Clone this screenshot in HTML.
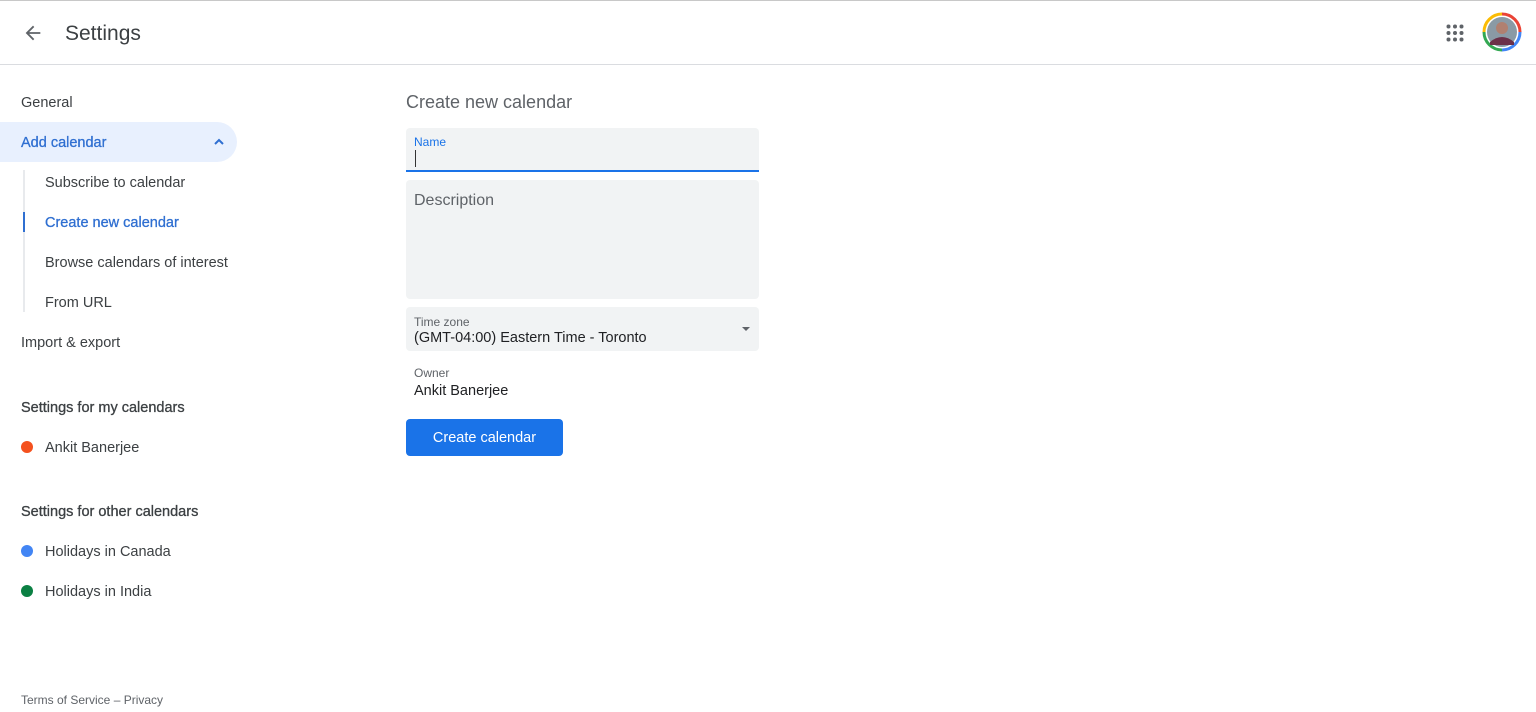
<!DOCTYPE html>
<html><head><style>
*{margin:0;padding:0;box-sizing:border-box}
body{width:1536px;height:712px;overflow:hidden;background:#fff;font-family:"Liberation Sans",Arial,sans-serif;color:#3c4043;position:relative}
.abs{position:absolute;white-space:nowrap}
.hdr{position:absolute;left:0;top:0;width:1536px;height:65px;border-top:1px solid #c8c8c8;border-bottom:1px solid #dadce0}
.nav{font-size:14.5px;color:#3c4043}
.blue{color:#2f6fd1;-webkit-text-stroke:0.3px #2f6fd1}
.med{-webkit-text-stroke:0.3px #3c4043}
.dot{position:absolute;width:12px;height:12px;border-radius:50%}
.field{position:absolute;left:406px;width:353px;background:#f1f3f4;border-radius:4px 4px 0 0}
</style></head><body>
<div class="hdr"></div>
<svg class="abs" style="left:22px;top:22px" width="22" height="22" viewBox="0 0 24 24"><path d="M20 11H7.8l5.6-5.6L12 4l-8 8 8 8 1.4-1.4L7.8 13H20z" fill="#5f6368"/></svg>
<div class="abs" style="left:65px;top:22px;font-size:21px;color:#3c4043">Settings</div>
<svg class="abs" style="left:1446px;top:24px" width="18" height="18" viewBox="0 0 18 18" fill="#5f6368"><circle cx="2.5" cy="2.5" r="2"/><circle cx="9" cy="2.5" r="2"/><circle cx="15.5" cy="2.5" r="2"/><circle cx="2.5" cy="9" r="2"/><circle cx="9" cy="9" r="2"/><circle cx="15.5" cy="9" r="2"/><circle cx="2.5" cy="15.5" r="2"/><circle cx="9" cy="15.5" r="2"/><circle cx="15.5" cy="15.5" r="2"/></svg>
<svg class="abs" style="left:1482px;top:12px" width="40" height="40" viewBox="0 0 40 40">
<path d="M20 2A18 18 0 0 1 38 20" stroke="#ea4335" stroke-width="3" fill="none"/>
<path d="M38 20A18 18 0 0 1 20 38" stroke="#4285f4" stroke-width="3" fill="none"/>
<path d="M20 38A18 18 0 0 1 2 20" stroke="#34a853" stroke-width="3" fill="none"/>
<path d="M2 20A18 18 0 0 1 20 2" stroke="#fbbc05" stroke-width="3" fill="none"/>
<circle cx="20" cy="20" r="15" fill="#8a9aa5"/><circle cx="20" cy="16" r="6" fill="#b08070"/><path d="M8 30q12-10 24 0v3H8z" fill="#6b3048"/></svg>

<div class="abs" style="left:0;top:122px;width:237px;height:40px;background:#e8f0fe;border-radius:0 20px 20px 0"></div>
<div class="abs nav" style="left:21px;top:95px">General</div>
<div class="abs nav blue" style="left:21px;top:135px">Add calendar</div>
<svg class="abs" style="left:212px;top:136px" width="14" height="12" viewBox="0 0 14 12"><path d="M3 8l4-4 4 4" stroke="#2f6fd1" stroke-width="2" fill="none"/></svg>
<div class="abs" style="left:23px;top:170px;width:2px;height:142px;background:#e8eaed"></div>
<div class="abs" style="left:23px;top:212px;width:2px;height:20px;background:#2f6fd1"></div>
<div class="abs nav" style="left:45px;top:175px">Subscribe to calendar</div>
<div class="abs nav blue" style="left:45px;top:215px">Create new calendar</div>
<div class="abs nav" style="left:45px;top:255px">Browse calendars of interest</div>
<div class="abs nav" style="left:45px;top:295px">From URL</div>
<div class="abs nav" style="left:21px;top:335px">Import &amp; export</div>
<div class="abs nav med" style="left:21px;top:400px">Settings for my calendars</div>
<div class="dot" style="left:21px;top:441px;background:#f4511e"></div>
<div class="abs nav" style="left:45px;top:440px">Ankit Banerjee</div>
<div class="abs nav med" style="left:21px;top:504px">Settings for other calendars</div>
<div class="dot" style="left:21px;top:545px;background:#4285f4"></div>
<div class="abs nav" style="left:45px;top:544px">Holidays in Canada</div>
<div class="dot" style="left:21px;top:585px;background:#0b8043"></div>
<div class="abs nav" style="left:45px;top:584px">Holidays in India</div>
<div class="abs" style="left:21px;top:693px;font-size:12px;color:#5f6368">Terms of Service – Privacy</div>

<div class="abs" style="left:406px;top:92px;font-size:18px;color:#5f6368">Create new calendar</div>
<div class="field" style="top:128px;height:44px;border-bottom:2px solid #1a73e8">
 <div class="abs" style="left:8px;top:7px;font-size:12px;color:#1a73e8">Name</div>
 <div class="abs" style="left:9px;top:22px;width:1px;height:17px;background:#333"></div>
</div>
<div class="field" style="top:180px;height:119px;border-radius:4px">
 <div class="abs" style="left:8px;top:12px;font-size:16px;color:#5f6368">Description</div>
</div>
<div class="field" style="top:307px;height:44px;border-radius:4px">
 <div class="abs" style="left:8px;top:8px;font-size:12px;color:#5f6368">Time zone</div>
 <div class="abs" style="left:8px;top:23px;font-size:14.5px;color:#202124">(GMT-04:00) Eastern Time - Toronto</div>
 <div class="abs" style="left:336px;top:20px;width:0;height:0;border-left:4px solid transparent;border-right:4px solid transparent;border-top:4px solid #5f6368"></div>
</div>
<div class="abs" style="left:414px;top:366px;font-size:12px;color:#5f6368">Owner</div>
<div class="abs" style="left:414px;top:383px;font-size:14.5px;color:#202124">Ankit Banerjee</div>
<div class="abs" style="left:406px;top:419px;width:157px;height:37px;background:#1a73e8;border-radius:4px;color:#fff;font-size:14.5px;text-align:center;line-height:38px">Create calendar</div>
</body></html>
